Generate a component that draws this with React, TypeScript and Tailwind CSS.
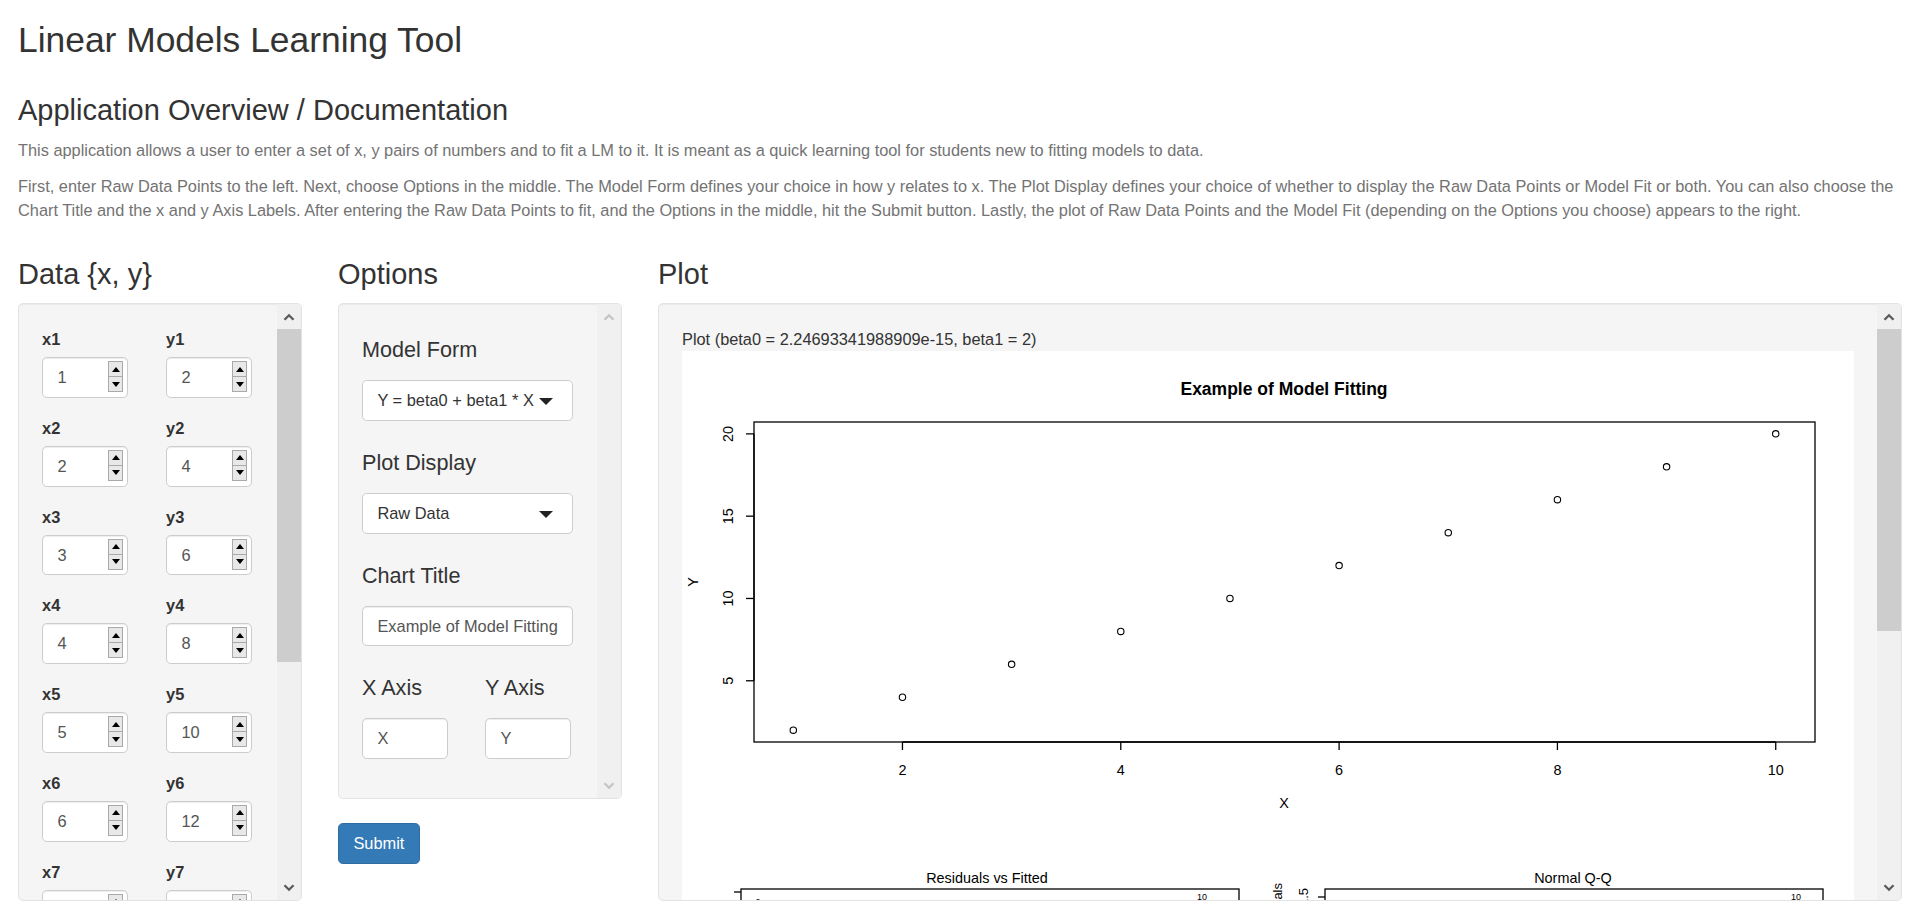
import React from "react";

const FONT = "font-['Liberation_Sans',Arial,Helvetica,sans-serif]";

function Chevron({ up, disabled }: { up?: boolean; disabled?: boolean }) {
  return (
    <svg width="12" height="8" viewBox="0 0 12 8">
      <polyline
        points={up ? "1.5,6.8 6,2.3 10.5,6.8" : "1.5,1.2 6,5.7 10.5,1.2"}
        fill="none"
        stroke={disabled ? "#c4c4c4" : "#5a5a5a"}
        strokeWidth="2.3"
      />
    </svg>
  );
}

function Scrollbar({ kind }: { kind: "data" | "options" | "plot" }) {
  const disabled = kind === "options";
  return (
    <div className="flex w-[24px] shrink-0 flex-col bg-[#f0f0f0]">
      <div className="flex h-[25px] shrink-0 items-center justify-center">
        <Chevron up disabled={disabled} />
      </div>
      <div className="flex-1">
        {kind === "data" && <div className="h-[333px] w-full bg-[#cdcdcd]" />}
        {kind === "plot" && <div className="h-[302px] w-full bg-[#cdcdcd]" />}
      </div>
      <div className="flex h-[25px] shrink-0 items-center justify-center">
        <Chevron disabled={disabled} />
      </div>
    </div>
  );
}

function Spinner() {
  return (
    <div className="absolute right-[4px] top-[3px] flex h-[31px] w-[15px] flex-col border border-[#a9a9a9] bg-[#e8e8e8]">
      <div className="flex flex-1 items-center justify-center border-b border-[#a9a9a9]">
        <div className="h-0 w-0 border-x-[4.5px] border-b-[5px] border-x-transparent border-b-black" />
      </div>
      <div className="flex flex-1 items-center justify-center">
        <div className="h-0 w-0 border-x-[4.5px] border-t-[5px] border-x-transparent border-t-black" />
      </div>
    </div>
  );
}

function NumInput({ value }: { value: number }) {
  return (
    <div className="relative flex h-[40.8px] w-[86px] items-center rounded-[4.8px] border border-[#ccc] bg-white pl-[14.4px] text-[16.4px] text-[#555] shadow-[inset_0_1px_1px_rgba(0,0,0,0.075)]">
      {value}
      <Spinner />
    </div>
  );
}

function TextBox({ value, w }: { value: string; w: string }) {
  return (
    <div
      className={`flex h-[40.8px] items-center rounded-[4.8px] border border-[#ccc] bg-white pl-[14.4px] text-[16.4px] text-[#555] shadow-[inset_0_1px_1px_rgba(0,0,0,0.075)] ${w}`}
    >
      <span className="whitespace-nowrap">{value}</span>
    </div>
  );
}

function SelectBox({ value }: { value: string }) {
  return (
    <div className="relative flex h-[40.8px] w-[211px] items-center rounded-[4.8px] border border-[#ccc] bg-white pl-[14.4px] text-[16.4px] text-[#333]">
      <span className="whitespace-nowrap">{value}</span>
      <div className="absolute right-[19px] top-[17px] h-0 w-0 border-x-[7px] border-t-[7px] border-x-transparent border-t-[#222]" />
    </div>
  );
}

function Well({ h, kind, children }: { h: string; kind: "data" | "options" | "plot"; children: React.ReactNode }) {
  return (
    <div
      className={`flex overflow-hidden rounded-[4.8px] border border-[#e3e3e3] bg-[#f5f5f5] shadow-[inset_0_1px_1px_rgba(0,0,0,0.05)] ${h}`}
    >
      <div className="flex min-w-0 flex-1 flex-col overflow-hidden px-[23px] pt-[23px]">{children}</div>
      <Scrollbar kind={kind} />
    </div>
  );
}

function H3({ children, cls }: { children: React.ReactNode; cls: string }) {
  return <h3 className={`text-[29px] font-normal leading-[32px] text-[#333] ${cls}`}>{children}</h3>;
}

function H4({ children, first }: { children: React.ReactNode; first?: boolean }) {
  return (
    <h4 className={`${first ? "mt-[11px]" : "mt-[10px]"} text-[21.6px] font-normal leading-[24px] text-[#333]`}>{children}</h4>
  );
}

function PlotSvg() {
  const px = (x: number) => 72 + (x - 0.64) * 109.16;
  const py = (y: number) => 391 - (y - 1.28) * 16.46;
  const pts = [1, 2, 3, 4, 5, 6, 7, 8, 9, 10];
  return (
    <svg width="1172" height="620" viewBox="0 0 1172 620" className="block shrink-0 bg-white" fontFamily="'Liberation Sans', Arial, sans-serif">
      <text x="602" y="44" textAnchor="middle" fontSize="17.5" fontWeight="bold" fill="#000">
        Example of Model Fitting
      </text>
      <rect x="72" y="71" width="1061" height="320" fill="none" stroke="#000" strokeWidth="1.3" />
      <line x1={px(2)} y1="391" x2={px(10)} y2="391" stroke="#000" strokeWidth="1.3" />
      {[2, 4, 6, 8, 10].map((t) => (
        <g key={t}>
          <line x1={px(t)} y1="391" x2={px(t)} y2="399" stroke="#000" strokeWidth="1.3" />
          <text x={px(t)} y="424" textAnchor="middle" fontSize="14.4" fill="#000">
            {t}
          </text>
        </g>
      ))}
      <line x1="72" y1={py(5)} x2="72" y2={py(20)} stroke="#000" strokeWidth="1.3" />
      {[5, 10, 15, 20].map((t) => (
        <g key={t}>
          <line x1="64" y1={py(t)} x2="72" y2={py(t)} stroke="#000" strokeWidth="1.3" />
          <text
            x="51"
            y={py(t)}
            textAnchor="middle"
            fontSize="14.4"
            fill="#000"
            transform={`rotate(-90 51 ${py(t)})`}
          >
            {t}
          </text>
        </g>
      ))}
      <text x="602" y="457" textAnchor="middle" fontSize="14.4" fill="#000">
        X
      </text>
      <text x="16" y="231" textAnchor="middle" fontSize="14.4" fill="#000" transform="rotate(-90 16 231)">
        Y
      </text>
      {pts.map((i) => (
        <circle key={i} cx={px(i)} cy={py(2 * i)} r="3.2" fill="none" stroke="#000" strokeWidth="1.1" />
      ))}

      {/* lower diagnostic plots */}
      <text x="305" y="532" textAnchor="middle" fontSize="14.4" fill="#000">
        Residuals vs Fitted
      </text>
      <rect x="59" y="538" width="498" height="200" fill="none" stroke="#000" strokeWidth="1.3" />
      <line x1="52" y1="541" x2="59" y2="541" stroke="#000" strokeWidth="1.3" />
      <text x="41" y="556" textAnchor="end" fontSize="13" fill="#000" transform="rotate(-90 41 556)">
        Residuals
      </text>
      <circle cx="76" cy="551" r="2.4" fill="none" stroke="#000" strokeWidth="1" />
      <text x="520" y="549" textAnchor="middle" fontSize="9" fill="#000">
        10
      </text>
      <circle cx="532" cy="552" r="2.4" fill="none" stroke="#000" strokeWidth="1" />

      <text x="891" y="532" textAnchor="middle" fontSize="14.4" fill="#000">
        Normal Q-Q
      </text>
      <rect x="643" y="538" width="498" height="200" fill="none" stroke="#000" strokeWidth="1.3" />
      <line x1="636" y1="546" x2="643" y2="546" stroke="#000" strokeWidth="1.3" />
      <text x="600" y="532" textAnchor="end" fontSize="13" fill="#000" transform="rotate(-90 600 532)">
        Standardized residuals
      </text>
      <text x="626" y="546" textAnchor="middle" fontSize="13" fill="#000" transform="rotate(-90 626 546)">
        1.5
      </text>
      <circle cx="1040" cy="552" r="2.4" fill="none" stroke="#000" strokeWidth="1" />
      <text x="1114" y="549" textAnchor="middle" fontSize="9" fill="#000">
        10
      </text>
      <circle cx="1126" cy="552" r="2.4" fill="none" stroke="#000" strokeWidth="1" />
    </svg>
  );
}

export default function App() {
  const rows = [1, 2, 3, 4, 5, 6, 7, 8, 9, 10];
  return (
    <div className={`h-[912px] overflow-hidden bg-white text-[#333] ${FONT}`}>
      <div className="ml-[18px] w-[1884px]">
        <h2 className="mt-[20px] text-[35.4px] font-normal leading-[40px] text-[#333]">Linear Models Learning Tool</h2>
        <H3 cls="mt-[34px]">Application Overview / Documentation</H3>
        <p className="mt-[12px] text-[16.35px] leading-[24px] text-[#737373]">
          This application allows a user to enter a set of x, y pairs of numbers and to fit a LM to it. It is meant as a quick
          learning tool for students new to fitting models to data.
        </p>
        <p className="mt-[12px] text-[16.35px] leading-[24px] text-[#737373]">
          First, enter Raw Data Points to the left. Next, choose Options in the middle. The Model Form defines your choice in how
          y relates to x. The Plot Display defines your choice of whether to display the Raw Data Points or Model Fit or both.
          You can also choose the Chart Title and the x and y Axis Labels. After entering the Raw Data Points to fit, and the
          Options in the middle, hit the Submit button. Lastly, the plot of Raw Data Points and the Model Fit (depending on the
          Options you choose) appears to the right.
        </p>

        <div className="mt-[12px] flex gap-[36px]">
          {/* Data column */}
          <div className="w-[284px] shrink-0">
            <H3 cls="mt-[24px] mb-[13px]">Data {"{x, y}"}</H3>
            <Well h="h-[598px]" kind="data">
              {rows.map((i) => (
                <div key={i} className="mb-[18px] flex shrink-0">
                  <div className="w-[124px] shrink-0">
                    <div className="text-[16.4px] font-bold leading-[24px]">x{i}</div>
                    <div className="mt-[6px]">
                      <NumInput value={i} />
                    </div>
                  </div>
                  <div className="shrink-0">
                    <div className="text-[16.4px] font-bold leading-[24px]">y{i}</div>
                    <div className="mt-[6px]">
                      <NumInput value={2 * i} />
                    </div>
                  </div>
                </div>
              ))}
            </Well>
          </div>

          {/* Options column */}
          <div className="w-[284px] shrink-0">
            <H3 cls="mt-[24px] mb-[13px]">Options</H3>
            <Well h="h-[496px]" kind="options">
              <div className="mb-[20px] flex flex-col">
                <H4 first>Model Form</H4>
                <div className="mt-[18px]">
                  <SelectBox value="Y = beta0 + beta1 * X" />
                </div>
              </div>
              <div className="mb-[20px] flex flex-col">
                <H4>Plot Display</H4>
                <div className="mt-[18px]">
                  <SelectBox value="Raw Data" />
                </div>
              </div>
              <div className="mb-[20px] flex flex-col">
                <H4>Chart Title</H4>
                <div className="mt-[18px]">
                  <TextBox value="Example of Model Fitting" w="w-[211px]" />
                </div>
              </div>
              <div className="flex">
                <div className="flex w-[123px] shrink-0 flex-col">
                  <H4>X Axis</H4>
                  <div className="mt-[18px]">
                    <TextBox value="X" w="w-[86px]" />
                  </div>
                </div>
                <div className="flex shrink-0 flex-col">
                  <H4>Y Axis</H4>
                  <div className="mt-[18px]">
                    <TextBox value="Y" w="w-[86px]" />
                  </div>
                </div>
              </div>
            </Well>
            <button className="mt-[24px] flex h-[40.8px] items-center rounded-[4.8px] border border-[#2e6da4] bg-[#337ab7] px-[14.4px] text-[16.4px] leading-[24px] text-white">
              Submit
            </button>
          </div>

          {/* Plot column */}
          <div className="w-[1244px] shrink-0">
            <H3 cls="mt-[24px] mb-[13px]">Plot</H3>
            <Well h="h-[598px]" kind="plot">
              <div className="shrink-0 text-[16.35px] leading-[24px] text-[#333]">Plot (beta0 = 2.24693341988909e-15, beta1 = 2)</div>
              <PlotSvg />
            </Well>
          </div>
        </div>
      </div>
    </div>
  );
}
